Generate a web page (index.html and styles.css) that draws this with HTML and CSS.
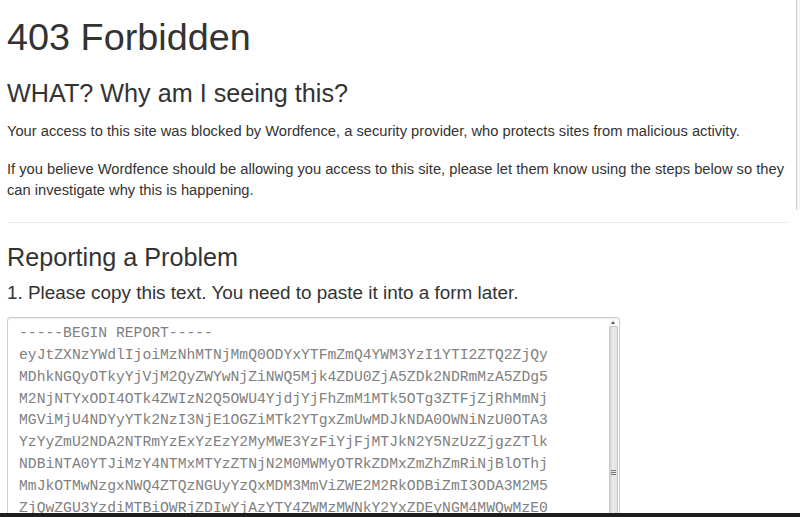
FILE: index.html
```html
<!DOCTYPE html>
<html>
  <head>
    <meta charset="UTF-8">
    <title>403 Forbidden</title>
    <link rel="stylesheet" href="styles.css">
  </head>
  <body>
    <h1>403 Forbidden</h1>
    <h2>WHAT? Why am I seeing this?</h2>
    <p>Your access to this site was blocked by Wordfence, a security provider, who protects sites from malicious activity.</p>
    <p>If you believe Wordfence should be allowing you access to this site, please let them know using the steps below so they can investigate why this is happening.</p>
    <hr>
    <h2 class="report-title">Reporting a Problem</h2>
    <h4>1. Please copy this text. You need to paste it into a form later.</h4>
    <div class="report">
      <div class="report-text">-----BEGIN REPORT-----
eyJtZXNzYWdlIjoiMzNhMTNjMmQ0ODYxYTFmZmQ4YWM3YzI1YTI2ZTQ2ZjQy
MDhkNGQyOTkyYjVjM2QyZWYwNjZiNWQ5Mjk4ZDU0ZjA5ZDk2NDRmMzA5ZDg5
M2NjNTYxODI4OTk4ZWIzN2Q5OWU4YjdjYjFhZmM1MTk5OTg3ZTFjZjRhMmNj
MGViMjU4NDYyYTk2NzI3NjE1OGZiMTk2YTgxZmUwMDJkNDA0OWNiNzU0OTA3
YzYyZmU2NDA2NTRmYzExYzEzY2MyMWE3YzFiYjFjMTJkN2Y5NzUzZjgzZTlk
NDBiNTA0YTJiMzY4NTMxMTYzZTNjN2M0MWMyOTRkZDMxZmZhZmRiNjBlOThj
MmJkOTMwNzgxNWQ4ZTQzNGUyYzQxMDM3MmViZWE2M2RkODBiZmI3ODA3M2M5
ZjQwZGU3YzdiMTBiOWRjZDIwYjAzYTY4ZWMzMWNkY2YxZDEyNGM4MWQwMzE0</div>
      <div class="report-scroll">
        <div class="scroll-up"></div>
        <div class="scroll-thumb">
          <div class="scroll-grip"></div>
        </div>
      </div>
    </div>
    <div class="page-scroll"></div>
    <div class="screen-edge"></div>
  </body>
</html>
```

FILE: styles.css
```css
* {
  box-sizing: border-box;
}
html {
  overflow: hidden;
}
body {
  margin: 0;
  padding: 0 10px 0 7px;
  font-family: "Liberation Sans", Arial, sans-serif;
  font-size: 14.7px;
  line-height: 21px;
  color: rgb(51, 51, 51);
  background-color: white;
}
h1 {
  font-size: 37.8px;
  line-height: 1.1;
  font-weight: normal;
  margin: 17px 0 21px;
}
h2 {
  font-size: 25.2px;
  line-height: 1.1;
  font-weight: normal;
  margin: 0 0 14px;
}
h2.report-title {
  margin-bottom: 10.5px;
}
h4 {
  font-size: 18.9px;
  line-height: 1.1;
  font-weight: normal;
  margin: 0 0 14px;
}
p {
  margin: 0 0 17px;
}
hr {
  border: 0;
  border-top: 1px solid rgb(238, 238, 238);
  margin: 21px 0;
}
.report {
  display: flex;
  width: 613px;
  height: 199px;
  border: 1px solid rgb(204, 204, 204);
  border-bottom: 0;
  border-radius: 4px 4px 0 0;
  box-shadow: inset 0 1px 1px rgba(0, 0, 0, 0.075);
}
.report-text {
  flex: 1;
  padding: 5px 11px 0;
  font-family: "Liberation Mono", "Courier New", monospace;
  font-size: 14.7px;
  line-height: 21.8px;
  color: rgb(128, 128, 128);
  white-space: pre;
  overflow: hidden;
}
.report-scroll {
  width: 9px;
  margin: 1px 1px 0 0;
  display: flex;
  flex-direction: column;
}
.scroll-up {
  height: 7px;
  position: relative;
  background-color: rgb(250, 250, 250);
}
.scroll-up:after {
  content: "";
  position: absolute;
  left: 2px;
  top: 2px;
  border-left: 2px solid transparent;
  border-right: 2px solid transparent;
  border-bottom: 3px solid rgb(90, 90, 90);
}
.scroll-thumb {
  flex: 1;
  display: flex;
  flex-direction: column;
  align-items: center;
  background: linear-gradient(to right, rgb(208, 208, 208), rgb(236, 236, 236) 40%, rgb(226, 226, 226));
  border: 1px solid rgb(200, 200, 200);
  border-bottom: 0;
  border-radius: 2px 2px 0 0;
}
.scroll-grip {
  margin-top: 143px;
  width: 5px;
  height: 5px;
  border-top: 1px solid rgb(120, 120, 120);
  border-bottom: 1px solid rgb(120, 120, 120);
  background: linear-gradient(rgb(120, 120, 120), rgb(120, 120, 120)) center / 100% 1px no-repeat;
}
.page-scroll {
  position: fixed;
  top: 0;
  right: 0;
  width: 4px;
  height: 210px;
  border-left: 1px solid rgb(205, 205, 205);
  background-color: rgb(244, 244, 244);
}
.screen-edge {
  position: fixed;
  left: 0;
  right: 0;
  bottom: 0;
  height: 4px;
  background-color: rgb(30, 30, 30);
}
```
